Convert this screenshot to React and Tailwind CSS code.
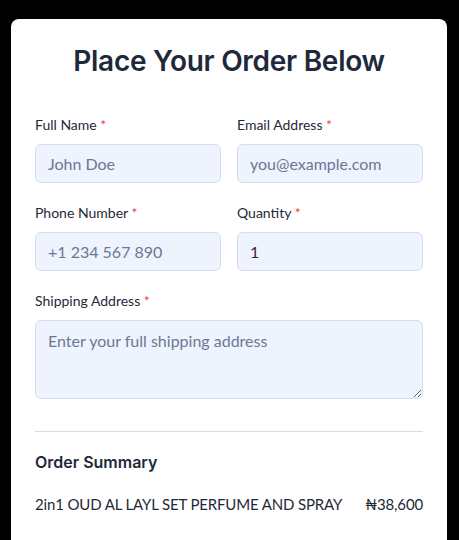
export default function App() {
  return (
    <div className="min-h-[540px] bg-black pl-[11px] pr-3 pt-[19px] font-['Lato','Noto_Sans',sans-serif]">
      <div className="rounded-lg bg-white px-6 pt-6 pb-8">
        {/* Heading */}
        <h1 className="text-center font-['Inter',sans-serif] text-[28px] font-semibold leading-9 tracking-[-0.01em] text-[#1e293b]">
          Place Your Order Below
        </h1>

        <form className="mt-9 flex flex-col gap-5">
          <div className="grid grid-cols-2 gap-4">
            <Field label="Full Name" placeholder="John Doe" />
            <Field label="Email Address" placeholder="you@example.com" />
          </div>
          <div className="grid grid-cols-2 gap-4">
            <Field label="Phone Number" placeholder="+1 234 567 890" />
            <Field label="Quantity" value="1" />
          </div>
          <div className="flex flex-col gap-[9px]">
            <label className="text-sm leading-5 text-[#1f2937]">
              Shipping Address <span className="text-[#ef4444]">*</span>
            </label>
            <textarea
              className="h-[79px] resize-y rounded-md border border-[#d3ddf2] bg-[#eef3fe] px-3 py-2 text-base text-[#1f2937] placeholder:text-[#6b7894] outline-none"
              placeholder="Enter your full shipping address"
            />
          </div>
        </form>

        <div className="mt-8 border-t border-[#d3ddf2] pt-4">
          <h2 className="font-['Inter',sans-serif] text-base font-semibold leading-7 text-[#1e293b]">
            Order Summary
          </h2>
          <div className="mt-4 flex items-center justify-between text-[15px] leading-6 tracking-[-0.01em] text-[#1f2937]">
            <span>2in1 OUD AL LAYL SET PERFUME AND SPRAY</span>
            <span>₦38,600</span>
          </div>
        </div>
      </div>
    </div>
  );
}

function Field({ label, placeholder, value }) {
  return (
    <div className="flex flex-col gap-[9px]">
      <label className="text-sm leading-5 text-[#1f2937]">
        {label} <span className="text-[#ef4444]">*</span>
      </label>
      <input
        className="h-[39px] w-full rounded-md border border-[#d3ddf2] bg-[#eef3fe] px-3 text-base text-[#3b1f4a] placeholder:text-[#6b7894] outline-none"
        placeholder={placeholder}
        defaultValue={value}
      />
    </div>
  );
}
